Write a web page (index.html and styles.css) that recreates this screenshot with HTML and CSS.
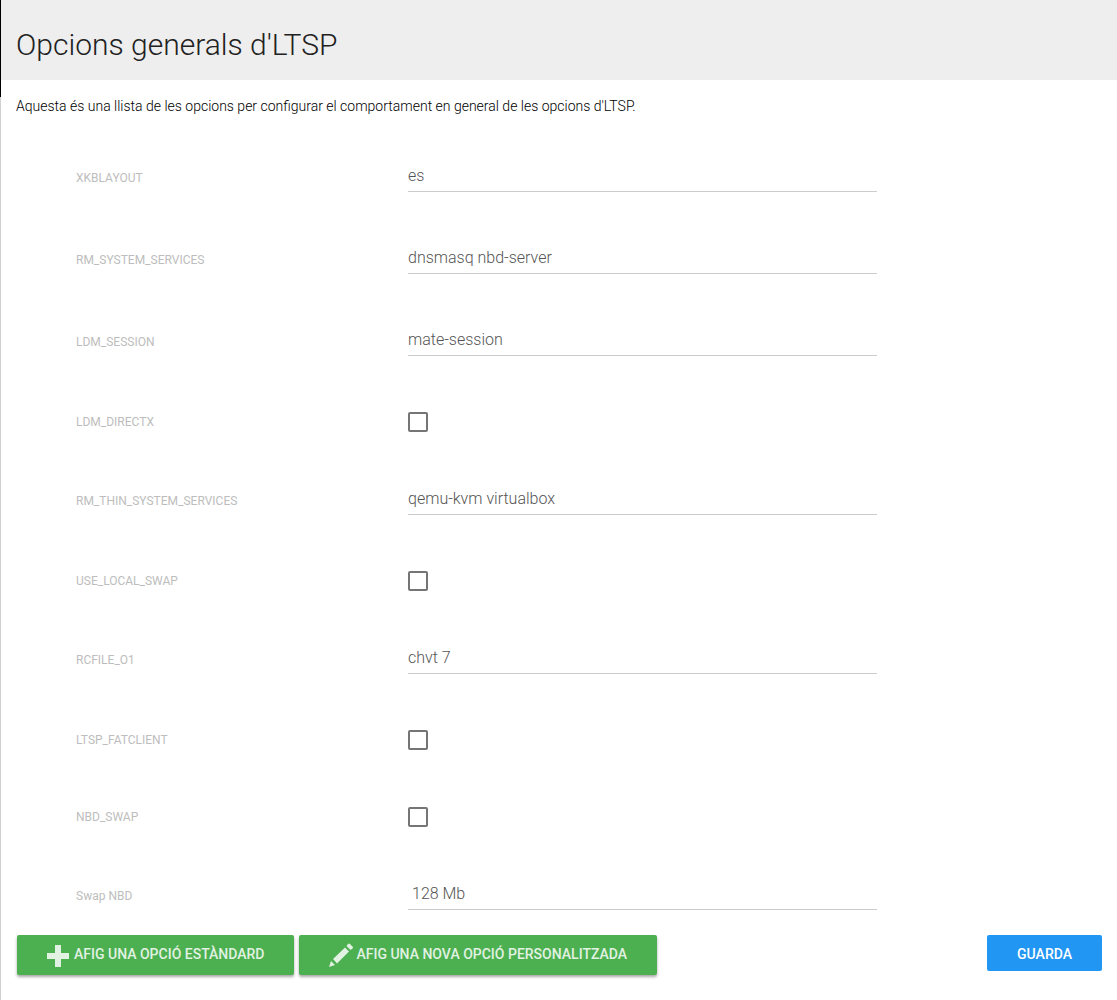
FILE: index.html
```html
<!DOCTYPE html>
<html lang="ca">
<head>
<meta charset="utf-8">
<meta name="viewport" content="width=device-width, initial-scale=1">
<title>Opcions generals d'LTSP</title>
<link rel="stylesheet" href="styles.css">
</head>
<body>
<main class="page">
  <header class="page-header">
    <h1 class="page-title">Opcions generals d'LTSP</h1>
  </header>
  <p class="intro">Aquesta és una llista de les opcions per configurar el comportament en general de les opcions d'LTSP.</p>
  <form class="options">
    <div class="fields">
      <div class="field"><label class="field-label" for="xkblayout">XKBLAYOUT</label><input class="text-input" id="xkblayout" type="text" value="es"></div>
      <div class="field"><label class="field-label" for="rm-services">RM_SYSTEM_SERVICES</label><input class="text-input" id="rm-services" type="text" value="dnsmasq nbd-server"></div>
      <div class="field"><label class="field-label" for="ldm-session">LDM_SESSION</label><input class="text-input" id="ldm-session" type="text" value="mate-session"></div>
      <div class="field field-check"><label class="field-label" for="ldm-directx">LDM_DIRECTX</label><input class="check" id="ldm-directx" type="checkbox"></div>
      <div class="field"><label class="field-label" for="rm-thin">RM_THIN_SYSTEM_SERVICES</label><input class="text-input" id="rm-thin" type="text" value="qemu-kvm virtualbox"></div>
      <div class="field field-check"><label class="field-label" for="local-swap">USE_LOCAL_SWAP</label><input class="check" id="local-swap" type="checkbox"></div>
      <div class="field"><label class="field-label" for="rcfile">RCFILE_O1</label><input class="text-input" id="rcfile" type="text" value="chvt 7"></div>
      <div class="field field-check"><label class="field-label" for="fatclient">LTSP_FATCLIENT</label><input class="check" id="fatclient" type="checkbox"></div>
      <div class="field field-check"><label class="field-label" for="nbd-swap">NBD_SWAP</label><input class="check" id="nbd-swap" type="checkbox"></div>
      <div class="field"><label class="field-label" for="swap-size">Swap NBD</label><select class="text-input size-select" id="swap-size"><option>128 Mb</option></select></div>
    </div>
    <div class="actions">
      <button class="btn btn-add" type="button"><svg class="icon" viewBox="0 0 24 24" aria-hidden="true"><path d="M8 2h6v8h8v6h-8v8H8v-8H0v-6h8z"/></svg>Afig una opció estàndard</button>
      <button class="btn btn-add" type="button"><svg class="icon" viewBox="0 0 24 24" aria-hidden="true"><path d="M0 24l2-6 4 4zM4 16L16 4.500l4 4L8 20.500zM17.500 3L19 1q1-1 2 0l2.500 2.500q1 1 0 2L21.500 7z"/></svg>Afig una nova opció personalitzada</button>
      <button class="btn btn-save" type="submit">Guarda</button>
    </div>
  </form>
</main>
</body>
</html>
```
FILE: styles.css
```css
* {
  box-sizing: border-box;
}

body {
  margin: 0;
  background: #fff;
  color: #212121;
  font-family: Roboto, "Liberation Sans", sans-serif;
  font-size: 14px;
  font-weight: 300;
  line-height: 20px;
}

/* The left edge is black beside the header and grey below it. */
.page {
  min-height: 100vh;
  padding: 0 0 24px 1px;
  background: linear-gradient(#000 97px, #d0d0d0 97px) left top / 1px 100% no-repeat;
}

.page-header {
  padding: 29px 15px 19px;
  background: #eee;
}

.page-title {
  margin: 0;
  font-size: 30px;
  font-weight: 300;
  line-height: 32px;
}

.intro {
  margin: 16px 15px 22px;
  color: #000;
}

.fields {
  display: grid;
  gap: 28px;
  margin: 0 60px;
}

.field {
  display: grid;
  grid-template-columns: 4fr 6fr 2fr;
  align-items: start;
  padding-top: 28px;
}

.field-label {
  padding: 4px 15px 0;
  color: #bdbdbd;
  font-size: 12px;
  font-weight: 400;
  line-height: 16px;
}

.text-input {
  height: 26px;
  margin: 0 14px 0 15px;
  padding: 0 0 6px;
  border: 0;
  border-bottom: 1px solid #ccc;
  border-radius: 0;
  outline: 0;
  background: transparent;
  color: #555;
  font: inherit;
  font-size: 16px;
}

.size-select {
  padding-left: 4px;
  appearance: none;
}

.field-check {
  min-height: 49px;
}

.field-check .field-label {
  padding-top: 2px;
}

.check {
  width: 20px;
  height: 20px;
  margin: 0 15px;
  border: 2px solid #757575;
  border-radius: 2px;
  background: #fff;
  appearance: none;
}

.check:checked {
  background: #757575;
}

.actions {
  display: flex;
  align-items: flex-start;
  gap: 5px;
  margin-top: 25px;
  padding: 0 15px 0 16px;
}

.btn {
  display: flex;
  align-items: flex-start;
  gap: 3px;
  height: 36px;
  padding: 8px 30px 0;
  border: 0;
  border-radius: 2px;
  color: #fff;
  font: inherit;
  font-weight: 500;
  line-height: 22px;
  text-transform: uppercase;
}

.btn-add {
  height: 40px;
  background: #4caf50;
  box-shadow: 0 2px 3px rgba(0, 0, 0, 0.35);
  color: #e1f2e2;
}

.btn-save {
  margin-left: auto;
  background: #2196f3;
}

.icon {
  width: 24px;
  height: 24px;
  fill: currentColor;
}
```
